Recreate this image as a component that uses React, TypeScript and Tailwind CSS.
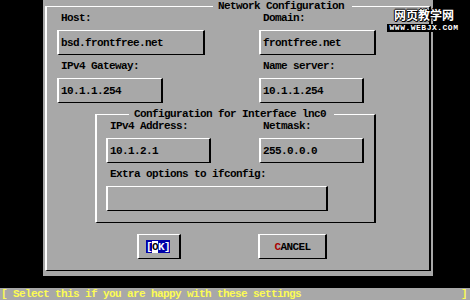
import React from "react";

const box =
  "h-[25px] border-t border-b border-l-2 border-r-2 border-t-white border-l-white border-r-black border-b-black flex items-center pl-[2px]";

function Label({ children }: { children: React.ReactNode }) {
  return <div className="h-[12px] leading-[12px] pl-[4px] whitespace-pre">{children}</div>;
}

export default function App() {
  return (
    <div className="relative w-[470px] h-[300px] bg-black flex flex-col overflow-hidden font-['Liberation_Mono','DejaVu_Sans_Mono',monospace] text-[11px] tracking-[-0.6px] font-bold leading-[12px] text-black">
      <div className="flex h-[276px] shrink-0">
        <div className="w-[43px] shrink-0" />
        <div className="w-[390px] shrink-0 bg-[#a8a8a8] pl-[2px] pt-[6px]">
          <div className="w-[386px] h-[265px] border-t border-b border-l-2 border-r-2 border-t-white border-l-white border-r-black border-b-black flex flex-col">
            <div className="-mt-[7px] ml-[166px] w-fit h-[12px] bg-[#a8a8a8] pl-[5px] pr-[8px] whitespace-pre">
              Network Configuration
            </div>
            <div className="pl-[10px] flex">
              <div className="w-[202px] flex flex-col">
                <Label>Host:</Label>
                <div className={`${box} mt-[6px] w-[148px]`}>bsd.frontfree.net</div>
                <div className="mt-[5px]">
                  <Label>IPv4 Gateway:</Label>
                </div>
                <div className={`${box} mt-[6px] w-[106px]`}>10.1.1.254</div>
              </div>
              <div className="flex flex-col">
                <Label>Domain:</Label>
                <div className={`${box} mt-[6px] w-[117px]`}>frontfree.net</div>
                <div className="mt-[5px]">
                  <Label>Name server:</Label>
                </div>
                <div className={`${box} mt-[6px] w-[105px]`}>10.1.1.254</div>
              </div>
            </div>
            <div className="mt-[11px] ml-[48px] w-[281px] h-[109px] border-t border-b border-l-2 border-r-2 border-t-white border-l-white border-r-black border-b-black flex flex-col">
              <div className="-mt-[7px] ml-[32px] w-fit h-[12px] bg-[#a8a8a8] pl-[5px] pr-[8px] whitespace-pre">
                Configuration for Interface lnc0
              </div>
              <div className="pl-[9px] flex flex-col">
                <div className="flex">
                  <div className="w-[153px] flex flex-col">
                    <Label>IPv4 Address:</Label>
                    <div className={`${box} mt-[6px] w-[105px]`}>10.1.2.1</div>
                  </div>
                  <div className="flex flex-col">
                    <Label>Netmask:</Label>
                    <div className={`${box} mt-[6px] w-[105px]`}>255.0.0.0</div>
                  </div>
                </div>
                <div className="mt-[5px]">
                  <Label>Extra options to ifconfig:</Label>
                </div>
                <div className={`${box} mt-[6px] w-[222px]`}></div>
              </div>
            </div>
            <div className="mt-[11px] pl-[90px] flex gap-[77px]">
              <div className="w-[44px] h-[25px] border-t border-b border-l-2 border-r-2 border-t-white border-l-white border-r-black border-b-black flex items-center pl-[7px]">
                <div className="h-[13px] flex items-center bg-[#0000a8] text-white">
                  <span className="w-[6px] text-center">[</span>
                  <span className="w-[6px] text-center bg-white text-black">O</span>
                  <span className="w-[6px] text-center">K</span>
                  <span className="w-[6px] text-center">]</span>
                </div>
              </div>
              <div className="w-[69px] h-[25px] border-t border-b border-l-2 border-r-2 border-t-white border-l-white border-r-black border-b-black flex items-center justify-center">
                <span>
                  <span className="text-[#a80000]">C</span>ANCEL
                </span>
              </div>
            </div>
          </div>
        </div>
        <div className="flex-1" />
      </div>
      <div className="h-[12px] shrink-0" />
      <div className="h-[12px] shrink-0 bg-[#a8a8a8] text-[#fcfc54] flex justify-between pl-[1px] pr-[3px] whitespace-pre">
        <span>[ Select this if you are happy with these settings</span>
        <span>]</span>
      </div>
      <div className="absolute left-[387px] top-[7px] w-[74px] flex flex-col items-center">
        <div className="text-[12px] leading-[15px] tracking-[0px] font-bold text-white font-['Noto_Sans_CJK_SC',sans-serif] [text-shadow:1px_0_#000,-1px_0_#000,0_1px_#000,0_-1px_#000,1px_1px_#000]">
          网页教学网
        </div>
        <div className="mt-[2px] w-[74px] h-[8px] bg-black text-white text-[8px] leading-[8px] tracking-[0.5px] font-bold font-['Liberation_Mono',monospace] text-center whitespace-pre">
          WWW.WEBJX.COM
        </div>
      </div>
    </div>
  );
}
